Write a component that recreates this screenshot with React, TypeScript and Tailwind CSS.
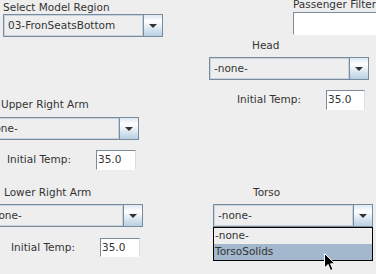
import React from "react";

const font = { fontFamily: '"DejaVu Sans", "Liberation Sans", sans-serif' };

function Combo({ value, className = "" }: { value: string; className?: string }) {
  return (
    <div className={`flex h-[23px] w-[160px] shrink-0 border border-[#7a8a99] bg-[#eeeeee] ${className}`}>
      <div className="flex flex-1 items-center overflow-hidden whitespace-nowrap border border-[#c6d4e1] pl-[3px] text-[10.5px] text-[#333333]">
        {value}
      </div>
      <div className="flex w-[19px] items-center justify-center border-l border-[#7a8a99] bg-[linear-gradient(to_bottom,#dde8f3_0%,#ffffff_30%,#b8cfe5_100%)]">
        <svg width="8" height="4" viewBox="0 0 8 4">
          <polygon points="0,0 8,0 4,4" fill="#333333" />
        </svg>
      </div>
    </div>
  );
}

function Field({ value, className = "" }: { value: string; className?: string }) {
  return (
    <div
      className={`flex items-center overflow-hidden whitespace-nowrap border-l border-t border-[#7a8a99] border-b-white border-r-[#dddddd] border-r border-b bg-white pl-[1px] text-[10.5px] text-[#333333] ${className}`}
    >
      {value}
    </div>
  );
}

function Label({ text, className = "" }: { text: string; className?: string }) {
  return (
    <div className={`h-[14px] whitespace-nowrap text-[10.5px] leading-[14px] text-[#333333] ${className}`}>{text}</div>
  );
}

export default function App() {
  return (
    <div
      style={font}
      className="relative h-[274px] w-[376px] overflow-hidden bg-[#eeeeee]"
    >
      <div className="flex">
        {/* Left column */}
        <div className="flex w-[200px] shrink-0 flex-col">
          <Label text="Select Model Region" className="ml-[3px]" />
          <Combo value="03-FronSeatsBottom" className="ml-[3px]" />

          <Label text="Upper Right Arm" className="ml-[1px] mt-[60px]" />
          <Combo value="-none-" className="ml-[-21px] mt-[6px]" />
          <div className="mt-[10px] flex h-[20px] items-center">
            <div className="ml-[7px] w-[89px] text-[10.5px] text-[#333333]">Initial Temp:</div>
            <Field value="35.0" className="h-[20px] w-[40px]" />
          </div>

          <Label text="Lower Right Arm" className="ml-[4px] mt-[15px]" />
          <Combo value="-none-" className="ml-[-17px] mt-[5px]" />
          <div className="mt-[11px] flex h-[19px] items-center">
            <div className="ml-[11px] w-[89px] text-[10.5px] text-[#333333]">Initial Temp:</div>
            <Field value="35.0" className="h-[19px] w-[40px]" />
          </div>
        </div>

        {/* Right column */}
        <div className="flex w-[176px] shrink-0 flex-col">
          <Label text="Passenger Filter" className="ml-[93px] mt-[-3px]" />
          <Field value="" className="ml-[93px] mt-[1px] h-[23px] w-[100px] shrink-0" />

          <Label text="Head" className="ml-[52px] mt-[3px]" />
          <Combo value="-none-" className="ml-[9px] mt-[5px]" />
          <div className="mt-[10px] flex h-[20px] items-center">
            <div className="ml-[37px] w-[89px] text-[10.5px] text-[#333333]">Initial Temp:</div>
            <Field value="35.0" className="h-[20px] w-[39px]" />
          </div>

          <Label text="Torso" className="ml-[53px] mt-[75px]" />
          <div className="relative ml-[13px] mt-[5px]">
            <Combo value="-none-" />
            <div className="absolute left-0 top-full z-10 flex w-[160px] flex-col border border-black bg-[#eeeeee] text-[10.5px] text-[#333333]">
              <div className="flex h-[16px] items-center pl-[1px]">-none-</div>
              <div className="flex h-[16px] items-center bg-[#a3b8cc] pl-[1px]">TorsoSolids</div>
            </div>
          </div>
        </div>
      </div>

      {/* mouse cursor */}
      <svg
        className="absolute left-[324px] top-[253px] z-20"
        width="12"
        height="19"
        viewBox="0 0 12 19"
      >
        <path
          d="M0.5 0.5 L0.5 15 L4 11.5 L6.5 17.5 L9 16.5 L6.5 10.8 L11 10.8 Z"
          fill="#000000"
          stroke="#ffffff"
          strokeWidth="1"
        />
      </svg>
    </div>
  );
}
